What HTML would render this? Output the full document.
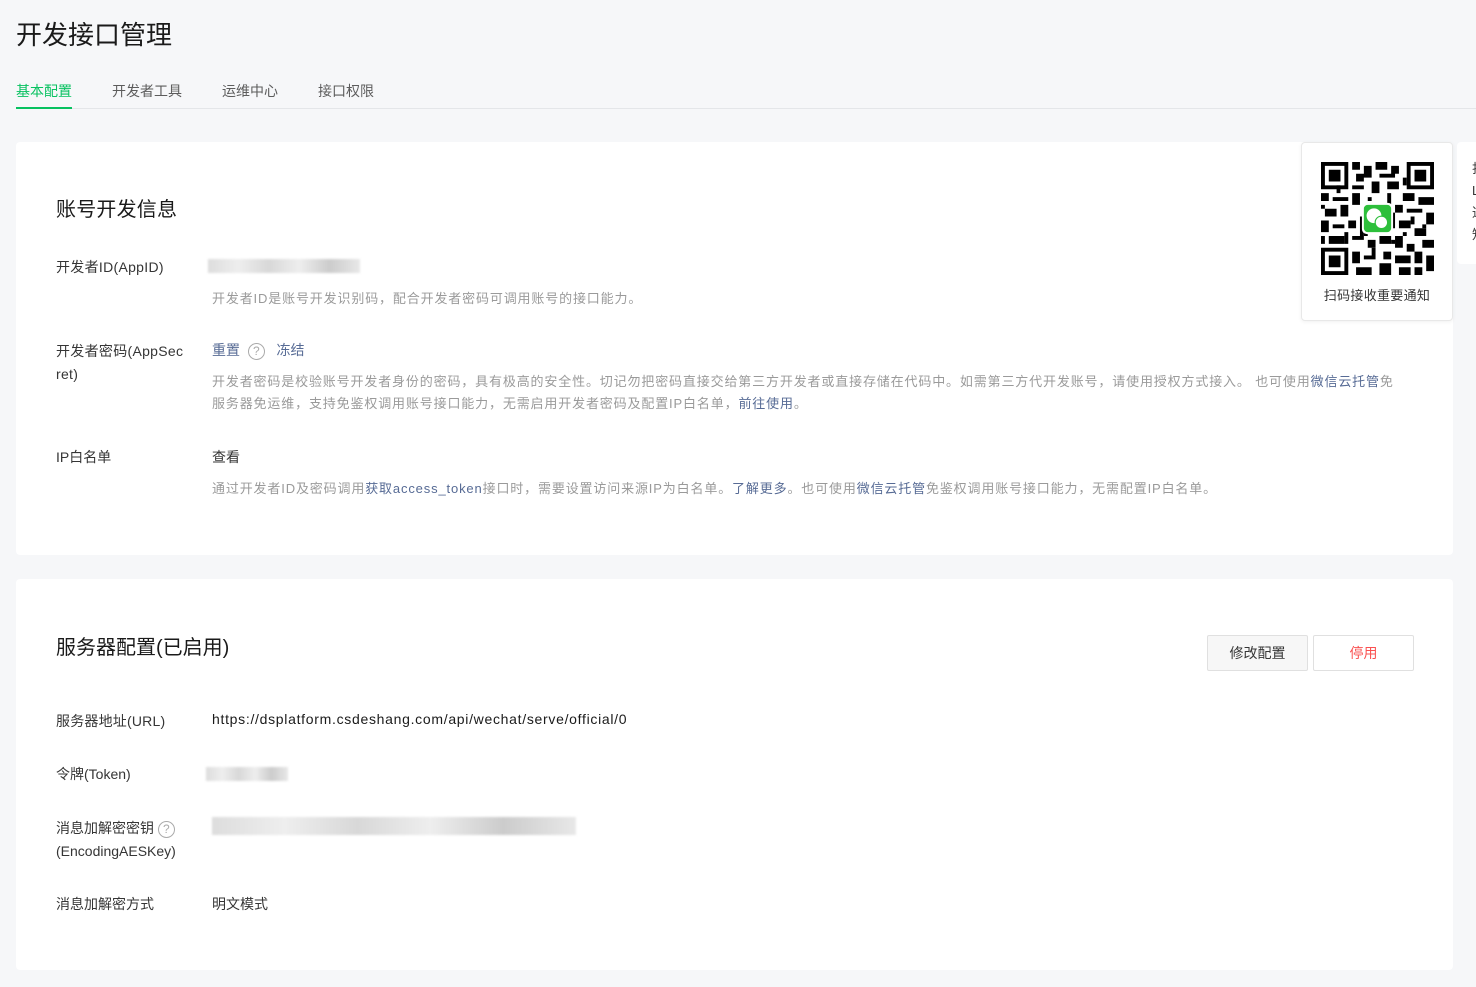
<!DOCTYPE html>
<html><head><meta charset="utf-8"><style>
*{margin:0;padding:0;box-sizing:border-box}
body{width:1476px;height:987px;overflow:hidden;background:#f6f7f9;font-family:"Liberation Sans","Noto Sans CJK SC",sans-serif;color:#353535;position:relative}
h1{position:absolute;left:16px;top:15px;font-size:26px;font-weight:400;color:#1a1a1a}
.tabs{position:absolute;left:16px;top:81px;right:0;height:28px;border-bottom:1px solid #e4e6e9;font-size:14px;color:#5c5c5c}
.tabs span{position:absolute;top:0}
.tabs .on{color:#07c160;border-bottom:2px solid #07c160;height:28px}
.card{position:absolute;left:16px;width:1437px;background:#fff;border-radius:4px}
.t{position:absolute;font-size:14px}
.g{color:#9a9a9a;font-size:13px;letter-spacing:.85px}
.l{color:#576b95}
.blur{position:absolute;height:14px;background:linear-gradient(90deg,#ddd,#eee,#d8d8d8,#eee,#ccc,#e8e8e8);filter:blur(1px)}
.q{display:inline-block;width:17px;height:17px;border:1px solid #aaa;border-radius:50%;font-size:12px;text-align:center;line-height:15px;color:#aaa;vertical-align:middle;letter-spacing:0}
.btn{position:absolute;top:56px;width:101px;height:36px;border:1px solid #e0e0e0;background:#f7f7f7;font-size:14px;text-align:center;line-height:34px;border-radius:2px}
</style></head><body>
<h1>开发接口管理</h1>
<div class="tabs"><span class="on" style="left:0">基本配置</span><span style="left:96px">开发者工具</span><span style="left:206px">运维中心</span><span style="left:302px">接口权限</span></div>

<div class="card" style="top:142px;height:413px">
<div class="t" style="left:40px;top:51px;font-size:20px;color:#1a1a1a;letter-spacing:.2px">账号开发信息</div>
<div class="t" style="left:40px;top:115px;letter-spacing:.3px">开发者ID(AppID)</div>
<div class="blur" style="left:192px;top:117px;width:152px"></div>
<div class="t g" style="left:196px;top:146px">开发者ID是账号开发识别码，配合开发者密码可调用账号的接口能力。</div>
<div class="t" style="left:40px;top:198px;line-height:23px;letter-spacing:.3px">开发者密码(AppSec<br>ret)</div>
<div class="t" style="left:196px;top:198px"><span class="l">重置</span> &nbsp;<span class="q">?</span> &nbsp;&nbsp;<span class="l">冻结</span></div>
<div class="t g" style="left:196px;top:229px;line-height:22px;width:1188px">开发者密码是校验账号开发者身份的密码，具有极高的安全性。切记勿把密码直接交给第三方开发者或直接存储在代码中。如需第三方代开发账号，请使用授权方式接入。 也可使用<span style="color:#576b95">微信云托管</span>免服务器免运维，支持免鉴权调用账号接口能力，无需启用开发者密码及配置IP白名单，<span class="l">前往使用</span>。</div>
<div class="t" style="left:40px;top:305px">IP白名单</div>
<div class="t" style="left:196px;top:305px">查看</div>
<div class="t g" style="left:196px;top:336px">通过开发者ID及密码调用<span style="color:#576b95">获取access_token</span>接口时，需要设置访问来源IP为白名单。<span class="l">了解更多</span>。也可使用<span style="color:#576b95">微信云托管</span>免鉴权调用账号接口能力，无需配置IP白名单。</div>
</div>

<div class="card" style="top:579px;height:391px">
<div class="t" style="left:40px;top:52px;font-size:20px;color:#1a1a1a">服务器配置(已启用)</div>
<div class="btn" style="left:1191px">修改配置</div>
<div class="btn" style="left:1297px;background:#fff;color:#fa5151">停用</div>
<div class="t" style="left:40px;top:132px;letter-spacing:.2px">服务器地址(URL)</div>
<div class="t" style="left:196px;top:132px;color:#1a1a1a;letter-spacing:.7px">https://dsplatform.csdeshang.com/api/wechat/serve/official/0</div>
<div class="t" style="left:40px;top:185px">令牌(Token)</div>
<div class="blur" style="left:190px;top:188px;width:82px"></div>
<div class="t" style="left:40px;top:238px;line-height:23px">消息加解密密钥 <span class="q">?</span><br>(EncodingAESKey)</div>
<div class="blur" style="left:196px;top:238px;width:364px;height:18px"></div>
<div class="t" style="left:40px;top:315px">消息加解密方式</div>
<div class="t" style="left:196px;top:315px">明文模式</div>
</div>

<div style="position:absolute;left:1301px;top:142px;width:152px;height:179px;background:#fff;border:1px solid #e8e8e8;border-radius:4px;box-shadow:0 1px 4px rgba(0,0,0,.06)">
<svg style="position:absolute;left:19px;top:19px" width="113" height="113" viewBox="0 0 29 29">
<rect width="29" height="29" fill="#fff"/>
<g fill="#000"><path d="M0 0h7v7H0zM22 0h7v7h-7zM0 22h7v7H0z"/></g>
<g fill="#fff"><path d="M1 1h5v5H1zM23 1h5v5h-5zM1 23h5v5H1z"/></g>
<g fill="#000"><path d="M2 2h3v3H2zM24 2h3v3h-3zM2 24h3v3H2z"/>
<path d="M8 0h2v2H8zM11 1h2v3h-2zM14 0h3v2h-3zM18 1h2v2h-2zM9 3h2v2H9zM15 3h4v1h-4zM8 6h3v1H8zM13 5h2v3h-2zM17 5h3v2h-3zM0 8h2v2H0zM3 9h4v1H3zM8 8h2v3H8zM21 8h3v2h-3zM25 9h4v2h-4zM1 12h3v2H1zM5 11h2v3H5zM19 11h2v2h-2zM22 12h4v1h-4zM27 13h2v3h-2zM0 15h2v3H0zM3 16h3v1H3zM7 15h2v2H7zM20 15h3v2h-3zM24 17h3v2h-3zM2 19h4v2H2zM8 19h3v1H8zM12 20h2v2h-2zM15 19h3v2h-3zM19 19h2v3h-2zM22 21h2v2h-2zM26 20h3v2h-3zM8 23h2v3H8zM11 24h3v1h-3zM16 23h2v2h-2zM19 24h4v2h-4zM24 23h2v3h-2zM27 24h2v4h-2zM9 27h4v2H9zM15 26h3v3h-3zM20 27h3v2h-3zM24 27h2v2h-2zM10 14h1v5h-1zM17 8h1v3h-1zM22 4h-1v2h1z"/>
<path d="M0 11h1v1H0zM4 6h1v2H4zM12 9h1v1h-1zM6 18h1v3H6zM11 17h1v2h-1zM18 13h1v4h-1zM23 14h1v2h-1zM26 16h1v1h-1zM13 22h1v2h-1zM18 20h1v1h-1zM21 18h1v1h-1zM14 12h1v1h-1zM0 19h1v2H0z"/></g>
<rect x="10.5" y="10.5" width="8" height="8" rx="1.3" fill="#fff"/>
<rect x="11" y="11" width="7" height="7" rx="1" fill="#2dbf3b"/>
<circle cx="13.6" cy="13.8" r="1.9" fill="#fff"/><circle cx="15.5" cy="15.5" r="1.6" fill="#fff" stroke="#2dbf3b" stroke-width=".3"/>
</svg>
<div style="position:absolute;left:0;right:0;top:142px;text-align:center;font-size:13px;color:#353535;letter-spacing:.3px">扫码接收重要通知</div>
</div>
<div style="position:absolute;left:1457px;top:142px;width:30px;height:122px;background:#fff;border-radius:4px;font-size:13px;line-height:22px;padding:16px 0 0 15px;color:#353535">扫<br>Ц<br>通<br>知</div>
</body></html>
